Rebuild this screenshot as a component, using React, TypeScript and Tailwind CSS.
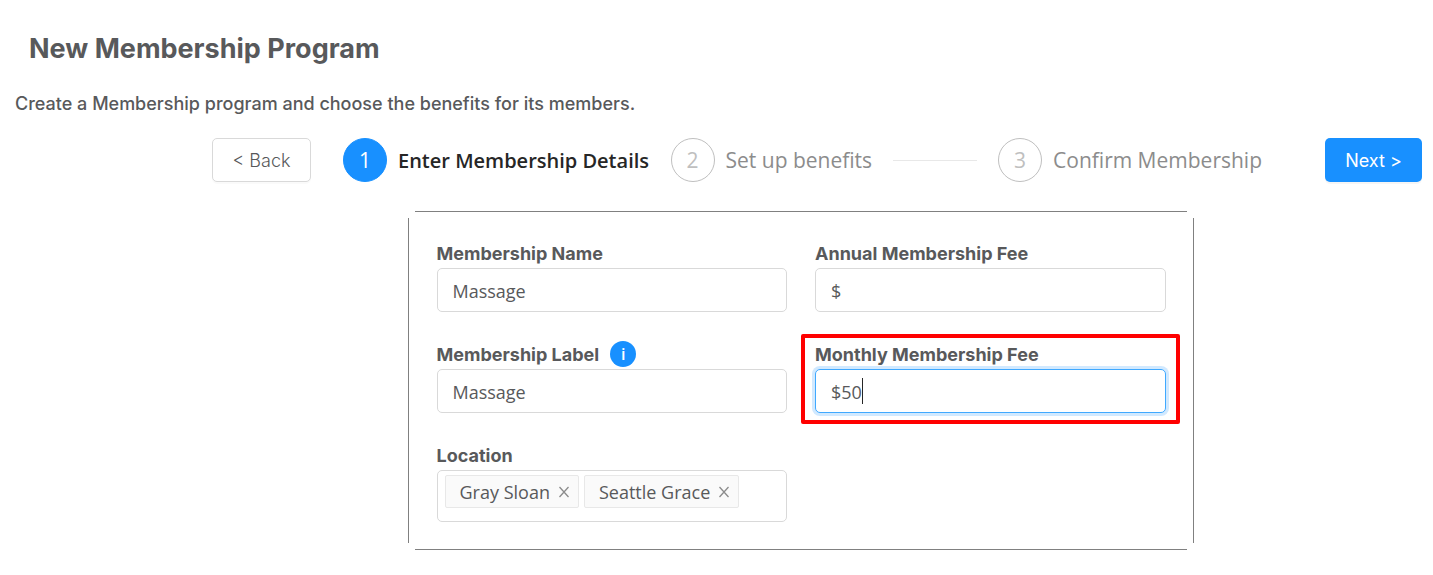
import { useState } from "react";
import clsx from "clsx";

const steps = ["Enter Membership Details", "Set up benefits", "Confirm Membership"];

const labelClass = "text-[18px] leading-6 font-bold text-[#58595b]";
const inputClass =
  "block h-11 w-full rounded-[5px] border border-[#d9d9d9] bg-white px-[15px] pt-0.5 font-['Open_Sans',sans-serif] text-[18px] text-[#58595b] outline-none focus:border-[#40a9ff] focus:shadow-[0_0_0_3px_rgba(24,144,255,0.2)]";

const Steps = ({ current }: { current: number }) => {
  return (
    <ol className="flex min-w-0 flex-1 gap-[21px] font-['Open_Sans',sans-serif] text-[21px]">
      {steps.map((title, i) => {
        const active = i === current;
        const last = i === steps.length - 1;
        return (
          <li
            key={title}
            className={clsx(
              "flex items-center gap-[11px] overflow-hidden whitespace-nowrap",
              last ? "flex-none" : "flex-1",
            )}
          >
            <span
              className={clsx(
                "flex size-11 flex-none items-center justify-center rounded-full border pt-0.5",
                active
                  ? "border-[#1890ff] bg-[#1890ff] text-white"
                  : "border-[#bfbfbf] text-[#bfbfbf]",
              )}
            >
              {i + 1}
            </span>
            <span
              className={clsx(
                "pt-0.5",
                active ? "text-[20px] font-semibold text-[#262626]" : "text-[#8c8c8c]",
              )}
            >
              {title}
            </span>
            {!active && !last && <span className="ml-[10px] h-px flex-1 bg-[#e8e8e8]" />}
          </li>
        );
      })}
    </ol>
  );
};

const App = () => {
  const [name, setName] = useState("Massage");
  const [label, setLabel] = useState("Massage");
  const [annualFee, setAnnualFee] = useState("$");
  const [monthlyFee, setMonthlyFee] = useState("$50");
  const [locations, setLocations] = useState(["Gray Sloan", "Seattle Grace"]);

  return (
    <main className="bg-white pb-6 font-['Inter',sans-serif] text-[#58595b]">
      <h1 className="pt-[31px] pl-[29px] text-[27px] leading-9 font-bold">
        New Membership Program
      </h1>
      <p className="mt-[25px] pl-[15px] text-[18px] leading-6 font-medium">
        Create a Membership program and choose the benefits for its members.
      </p>

      <div className="mt-[22px] flex items-center pr-[11px] pl-[212px]">
        <button
          type="button"
          className="h-11 w-[99px] flex-none rounded-[5px] border border-[#d9d9d9] bg-white text-[18px] font-light shadow-[0_2px_0_rgba(0,0,0,0.02)]"
        >
          &lt; Back
        </button>
        <div className="mr-[63px] ml-8 flex min-w-0 flex-1">
          <Steps current={0} />
        </div>
        <button
          type="button"
          className="h-11 w-[97px] flex-none rounded-[5px] bg-[#1890ff] text-[18px] text-white shadow-[0_2px_0_rgba(0,0,0,0.04)]"
        >
          Next &gt;
        </button>
      </div>

      <div className="mt-[29px] pl-[168px]">
        <form className="relative mx-auto max-w-[786px] pt-[31px] pr-7 pb-7 pl-[29px] before:pointer-events-none before:absolute before:inset-x-[7px] before:inset-y-0 before:border-y before:border-[#808080] after:pointer-events-none after:absolute after:inset-x-0 after:inset-y-[7px] after:border-x after:border-[#808080]">
          <div className="grid grid-cols-2 gap-x-7 gap-y-[31px]">
            <div>
              <label htmlFor="name" className={clsx(labelClass, "mb-0.5 block")}>
                Membership Name
              </label>
              <input
                id="name"
                className={inputClass}
                value={name}
                onChange={(e) => setName(e.target.value)}
              />
            </div>
            <div>
              <label htmlFor="annual-fee" className={clsx(labelClass, "mb-0.5 block")}>
                Annual Membership Fee
              </label>
              <input
                id="annual-fee"
                className={inputClass}
                value={annualFee}
                onChange={(e) => setAnnualFee(e.target.value)}
              />
            </div>
            <div>
              <div className="mb-0.5 flex h-6 items-center gap-[11px]">
                <label htmlFor="label" className={labelClass}>
                  Membership Label
                </label>
                <button
                  type="button"
                  aria-label="About the membership label"
                  className="mb-0.5 flex size-[26px] flex-none items-center justify-center rounded-full bg-[#1890ff] font-['Open_Sans',sans-serif] text-[16px] font-semibold text-white"
                >
                  i
                </button>
              </div>
              <input
                id="label"
                className={inputClass}
                value={label}
                onChange={(e) => setLabel(e.target.value)}
              />
            </div>
            <div className="relative">
              <div className="pointer-events-none absolute -inset-x-[14px] -top-[9px] -bottom-[11px] rounded-[2px] border-4 border-[#ff0000]" />
              <label htmlFor="monthly-fee" className={clsx(labelClass, "mb-0.5 block")}>
                Monthly Membership Fee
              </label>
              <div className="relative">
                <input
                  id="monthly-fee"
                  autoFocus
                  className={clsx(inputClass, "peer caret-transparent")}
                  value={monthlyFee}
                  onChange={(e) => setMonthlyFee(e.target.value)}
                />
                {/* caret sits right after the typed amount */}
                <span className="pointer-events-none invisible absolute inset-y-0 left-4 flex items-center font-['Open_Sans',sans-serif] text-[18px] peer-focus:visible">
                  <span aria-hidden="true" className="h-[26px] border-r border-[#262626]">
                    <span className="opacity-0">{monthlyFee}</span>
                  </span>
                </span>
              </div>
            </div>
            <div>
              <h2 className={clsx(labelClass, "mb-0.5")}>Location</h2>
              <ul className="flex h-[52px] gap-[5px] rounded-[5px] border border-[#d9d9d9] px-[7px] py-1 font-['Open_Sans',sans-serif] text-[18px]">
                {locations.map((location) => (
                  <li
                    key={location}
                    className="flex h-[33px] items-center gap-2 rounded-[2px] border border-[#e8e8e8] bg-[#fafafa] pr-2 pl-[14px] whitespace-nowrap"
                  >
                    <span className="pt-0.5">{location}</span>
                    <button
                      type="button"
                      aria-label={`Remove ${location}`}
                      onClick={() => setLocations(locations.filter((l) => l !== location))}
                    >
                      <svg
                        viewBox="0 0 12 12"
                        className="size-3 stroke-[#8c8c8c]"
                        strokeWidth="1.3"
                      >
                        <path d="M1.5 1 10.5 11M10.5 1 1.5 11" />
                      </svg>
                    </button>
                  </li>
                ))}
              </ul>
            </div>
          </div>
        </form>
      </div>
    </main>
  );
};

export default App;
